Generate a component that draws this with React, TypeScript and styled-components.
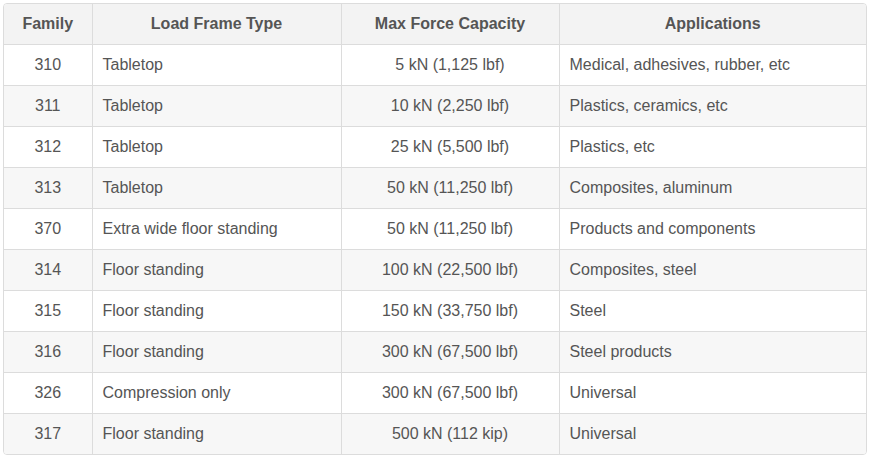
import styled, { createGlobalStyle } from "styled-components";

const GlobalStyle = createGlobalStyle`
  body {
    margin: 0;
    background: #fff;
    font-family: "Liberation Sans", Arial, sans-serif;
  }
`

const Page = styled.div`
  padding: 3px 5px 4px 3px;
`
const Frame = styled.div`
  border: 1px solid #dcdcdc;
  border-radius: 4px;
  overflow: hidden;
`
const Table = styled.table`
  width: 100%;
  border-collapse: collapse;
  table-layout: fixed;
  color: #555;
  font-size: 16px;
`
const Row = styled.tr<{ $striped?: boolean }>`
  background: ${({ $striped }) => ($striped ? "#f7f7f7" : "#fff")};

  &:not(:last-child) {
    border-bottom: 1px solid #dcdcdc;
  }
`
const HeadRow = styled.tr`
  background: #f3f3f3;
  border-bottom: 1px solid #dcdcdc;
`
const Th = styled.th`
  height: 40px;
  padding: 0 10px;
  font-weight: bold;
  text-align: center;
  vertical-align: middle;

  &:not(:last-child) {
    border-right: 1px solid #dcdcdc;
  }
`
const Td = styled.td<{ $align?: "left" | "center" }>`
  height: 40px;
  padding: 0 10px;
  text-align: ${({ $align }) => $align || "left"};
  vertical-align: middle;
  white-space: nowrap;

  &:not(:last-child) {
    border-right: 1px solid #dcdcdc;
  }
`

const rows = [
  ["310", "Tabletop", "5 kN (1,125 lbf)", "Medical, adhesives, rubber, etc"],
  ["311", "Tabletop", "10 kN (2,250 lbf)", "Plastics, ceramics, etc"],
  ["312", "Tabletop", "25 kN (5,500 lbf)", "Plastics, etc"],
  ["313", "Tabletop", "50 kN (11,250 lbf)", "Composites, aluminum"],
  ["370", "Extra wide floor standing", "50 kN (11,250 lbf)", "Products and components"],
  ["314", "Floor standing", "100 kN (22,500 lbf)", "Composites, steel"],
  ["315", "Floor standing", "150 kN (33,750 lbf)", "Steel"],
  ["316", "Floor standing", "300 kN (67,500 lbf)", "Steel products"],
  ["326", "Compression only", "300 kN (67,500 lbf)", "Universal"],
  ["317", "Floor standing", "500 kN (112 kip)", "Universal"],
]

export default function App() {
  return (
    <>
      <GlobalStyle />
      <Page>
        <Frame>
          <Table>
            <colgroup>
              <col style={{ width: 88 }} />
              <col style={{ width: 249 }} />
              <col style={{ width: 218 }} />
              <col />
            </colgroup>
            <thead>
              <HeadRow>
                <Th>Family</Th>
                <Th>Load Frame Type</Th>
                <Th>Max Force Capacity</Th>
                <Th>Applications</Th>
              </HeadRow>
            </thead>
            <tbody>
              {rows.map((r, i) => (
                <Row key={r[0]} $striped={i % 2 === 1}>
                  <Td $align="center">{r[0]}</Td>
                  <Td>{r[1]}</Td>
                  <Td $align="center">{r[2]}</Td>
                  <Td>{r[3]}</Td>
                </Row>
              ))}
            </tbody>
          </Table>
        </Frame>
      </Page>
    </>
  )
}
